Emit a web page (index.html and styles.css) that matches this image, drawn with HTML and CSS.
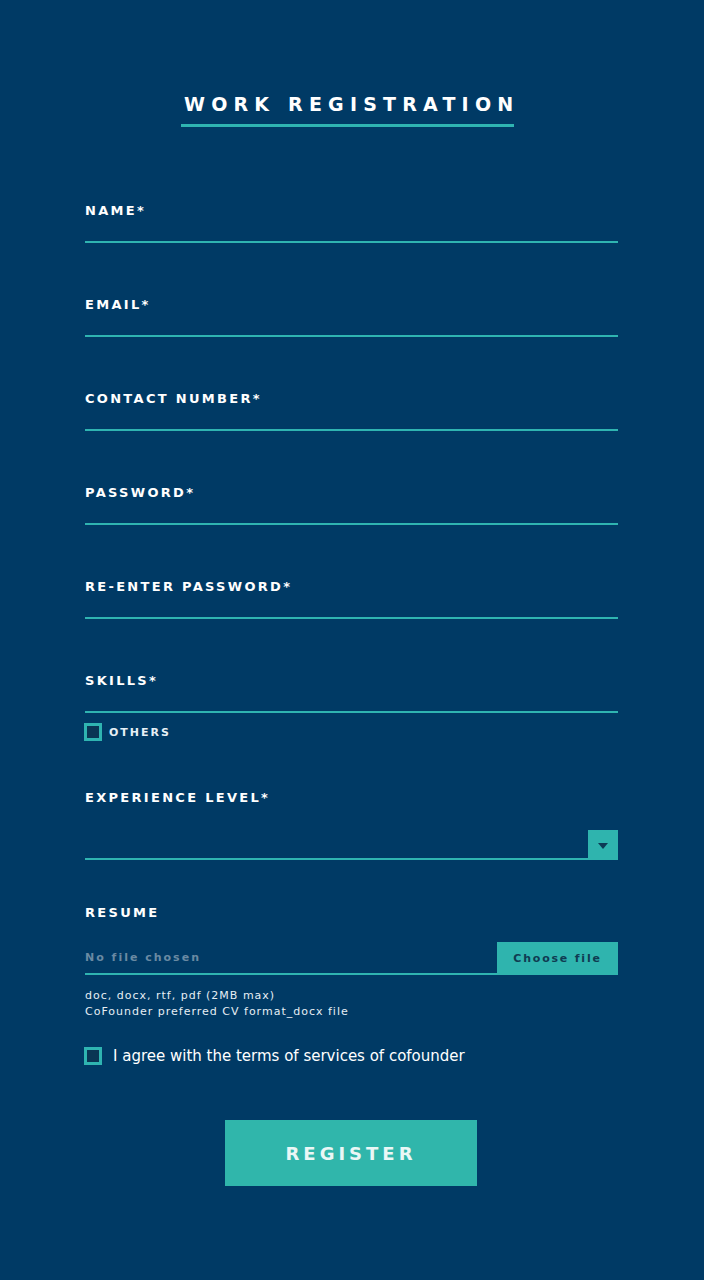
FILE: index.html
```html
<!DOCTYPE html>
<html lang="en">
<head>
  <meta charset="UTF-8" />
  <title>Work Registration</title>
  <link rel="stylesheet" href="styles.css">
</head>
<body>

  <form class="form">
    <h1 class="title">WORK REGISTRATION</h1>

    <div class="field">
      <label for="name">NAME*</label>
      <input type="text" id="name" />
    </div>

    <div class="field">
      <label for="email">EMAIL*</label>
      <input type="email" id="email" />
    </div>

    <div class="field">
      <label for="phone">CONTACT NUMBER*</label>
      <input type="tel" id="phone" />
    </div>

    <div class="field">
      <label for="pass">PASSWORD*</label>
      <input type="password" id="pass" />
    </div>

    <div class="field">
      <label for="pass2">RE-ENTER PASSWORD*</label>
      <input type="password" id="pass2" />
    </div>

    <div class="field">
      <label for="skills">SKILLS*</label>
      <input type="text" id="skills" />
    </div>

    <label class="check small">
      <span class="box"></span>
      OTHERS
    </label>

    <div class="field exp">
      <label for="level">EXPERIENCE LEVEL*</label>
      <div class="select">
        <select id="level"></select>
        <span class="arrow"></span>
      </div>
    </div>

    <div class="field resume">
      <label>RESUME</label>
      <div class="file">
        <span class="file-name">No file chosen</span>
        <span class="file-btn">Choose file</span>
      </div>
      <p class="hint">doc, docx, rtf, pdf (2MB max)<br>CoFounder preferred CV format_docx file</p>
    </div>

    <label class="check agree">
      <span class="box"></span>
      I agree with the terms of services of cofounder
    </label>

    <button type="button" class="register">REGISTER</button>
  </form>

</body>
</html>
```

FILE: styles.css
```css
html, body {
  margin: 0;
  background: #003a65;
}
body {
  font-family: 'DejaVu Sans', sans-serif;
  color: #fff;
  min-height: 1280px;
}
.form {
  width: 533px;
  padding: 92px 0 0 85px;
}
.title {
  box-sizing: border-box;
  width: 333px;
  margin: 0 0 0 96px;
  padding: 0 0 8px 3px;
  white-space: nowrap;
  font-size: 19px;
  font-weight: bold;
  letter-spacing: 6.2px;
  line-height: 24px;
  border-bottom: 3px solid #2fb4b1;
}
.field {
  margin-top: 52px;
}
.field:first-of-type {
  margin-top: 74px;
}
.field label {
  display: block;
  font-size: 13px;
  font-weight: bold;
  letter-spacing: 2.3px;
  line-height: 20px;
}
.field input {
  display: block;
  width: 100%;
  box-sizing: border-box;
  height: 22px;
  padding: 0;
  border: none;
  border-bottom: 2px solid #2fb4b1;
  background: transparent;
  color: #fff;
  font-size: 14px;
}
.check {
  display: flex;
  align-items: center;
  gap: 7px;
  margin-left: -1px;
}
.box {
  width: 12px;
  height: 12px;
  border: 3px solid #2fb4b1;
  background: #0a3554;
  flex-shrink: 0;
}
.small {
  margin-top: 10px;
  font-size: 11px;
  font-weight: bold;
  letter-spacing: 2px;
  color: #e6f0f6;
}
.exp {
  margin-top: 47px;
}
.select {
  display: flex;
  margin-top: 22px;
}
.select select {
  flex: 1;
  appearance: none;
  height: 30px;
  border: none;
  border-bottom: 2px solid #2fb4b1;
  background: transparent;
}
.arrow {
  width: 30px;
  height: 30px;
  background: #2fb4ae;
  display: flex;
  align-items: center;
  justify-content: center;
}
.arrow::after {
  content: "";
  border-left: 5px solid transparent;
  border-right: 5px solid transparent;
  border-top: 6px solid #0d3a55;
  margin-top: 1px;
}
.resume {
  margin-top: 43px;
}
.file {
  display: flex;
  align-items: flex-end;
  margin-top: 19px;
}
.file-name {
  flex: 1;
  font-size: 11px;
  font-weight: bold;
  letter-spacing: 2px;
  color: #6a8aa3;
  line-height: 30px;
  border-bottom: 2px solid #2fb4b1;
}
.file-btn {
  width: 121px;
  height: 33px;
  line-height: 33px;
  text-align: center;
  background: #2fb4ae;
  color: #0f3b52;
  font-size: 11px;
  font-weight: bold;
  letter-spacing: 1.8px;
}
.hint {
  margin: 13px 0 0;
  font-size: 11px;
  line-height: 16px;
  letter-spacing: 1px;
  color: #e6eef4;
}
.agree {
  margin-top: 27px;
  gap: 11px;
  font-size: 15px;
  color: #fff;
}
.register {
  display: block;
  margin: 55px 0 0 140px;
  width: 252px;
  height: 66px;
  border: none;
  background: #30b6ab;
  color: #eaf7f6;
  font-family: 'DejaVu Sans', sans-serif;
  font-size: 18px;
  font-weight: bold;
  letter-spacing: 4px;
  cursor: pointer;
}
```
